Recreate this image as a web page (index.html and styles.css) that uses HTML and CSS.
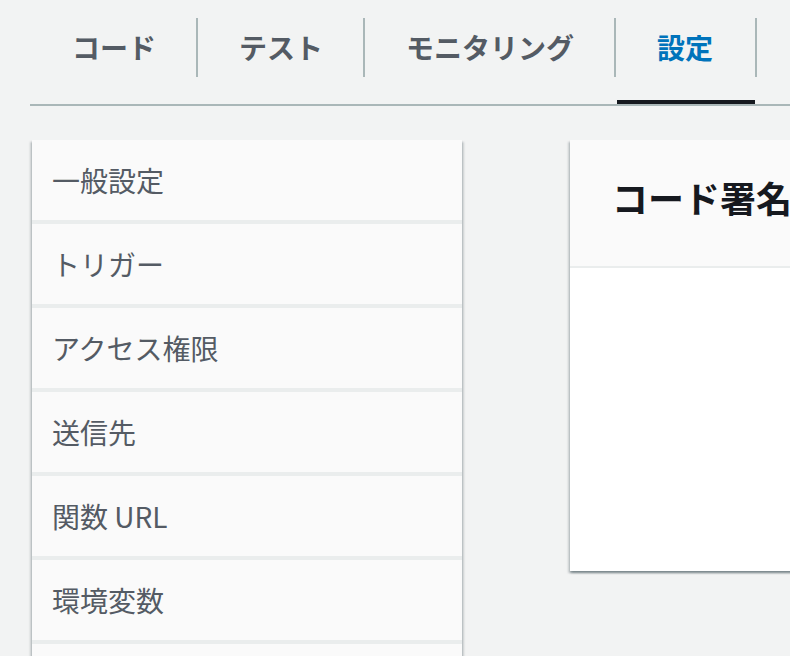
FILE: index.html
```html
<!DOCTYPE html>
<html lang="ja">
<head>
<meta charset="utf-8">
<title>設定</title>
<link rel="stylesheet" href="styles.css">
</head>
<body>
<div class="page">
  <nav class="tabs">
    <div class="tab"><span class="tab-label">コード</span></div>
    <div class="tab"><span class="tab-label">テスト</span></div>
    <div class="tab"><span class="tab-label">モニタリング</span></div>
    <div class="tab tab-active"><span class="tab-label">設定</span></div>
  </nav>
  <div class="content">
    <ul class="side-nav">
      <li class="side-item">一般設定</li>
      <li class="side-item">トリガー</li>
      <li class="side-item">アクセス権限</li>
      <li class="side-item">送信先</li>
      <li class="side-item">関数 URL</li>
      <li class="side-item">環境変数</li>
      <li class="side-item"></li>
    </ul>
    <section class="card">
      <header class="card-header"><h2 class="card-title">コード署名</h2></header>
      <div class="card-body"></div>
    </section>
  </div>
</div>
</body>
</html>
```

FILE: styles.css
```css
html, body {
  margin: 0;
  padding: 0;
}
body {
  background: #f2f3f3;
  font-family: "Noto Sans CJK JP", "Noto Sans", sans-serif;
  overflow: hidden;
  width: 790px;
  height: 656px;
}
.page {
  padding-left: 30px;
}
.tabs {
  display: flex;
  border-bottom: 2px solid #aab7b8;
  white-space: nowrap;
}
.tab {
  position: relative;
  flex: none;
  padding: 18px 0 27px;
}
.tab-label {
  display: block;
  height: 59px;
  line-height: 59px;
  padding: 0 40px 0 41px;
  border-left: 2px solid #aab7b8;
  font-size: 28px;
  font-weight: 700;
  color: #545b64;
}
.tab:first-child .tab-label {
  border-left: none;
  padding-left: 42px;
}
.tab:last-child .tab-label {
  border-right: 2px solid #aab7b8;
  padding-right: 42px;
}
.tab-active .tab-label {
  color: #0073bb;
}
.tab-active::after {
  content: "";
  position: absolute;
  left: 3px;
  right: 2px;
  bottom: 0;
  height: 4px;
  background: #16191f;
}
.content {
  display: grid;
  grid-template-columns: 430px 700px;
  column-gap: 108px;
  align-items: start;
  padding: 34px 0 0 2px;
}
.side-nav {
  list-style: none;
  margin: 0;
  padding: 0;
  background: #eaeded;
  box-shadow: 0 2px 2px 0 rgba(0, 28, 36, 0.3), 2px 2px 2px 0 rgba(0, 28, 36, 0.15), -2px 2px 2px 0 rgba(0, 28, 36, 0.15);
  display: flex;
  flex-direction: column;
  gap: 4px;
}
.side-item {
  height: 80px;
  line-height: 80px;
  padding-left: 20px;
  background: #fafafa;
  font-size: 28px;
  color: #545b64;
}
.card {
  background: #ffffff;
  box-shadow: 0 2px 2px 0 rgba(0, 28, 36, 0.3), 2px 2px 2px 0 rgba(0, 28, 36, 0.15), -2px 2px 2px 0 rgba(0, 28, 36, 0.15);
}
.card-header {
  background: #fafafa;
  border-bottom: 2px solid #eaeded;
  height: 126px;
  padding-left: 42px;
  display: flex;
  align-items: center;
}
.card-title {
  margin: 0;
  font-size: 36px;
  font-weight: 700;
  color: #16191f;
  line-height: 1.2;
  padding-bottom: 10px;
}
.card-body {
  height: 303px;
}
```
